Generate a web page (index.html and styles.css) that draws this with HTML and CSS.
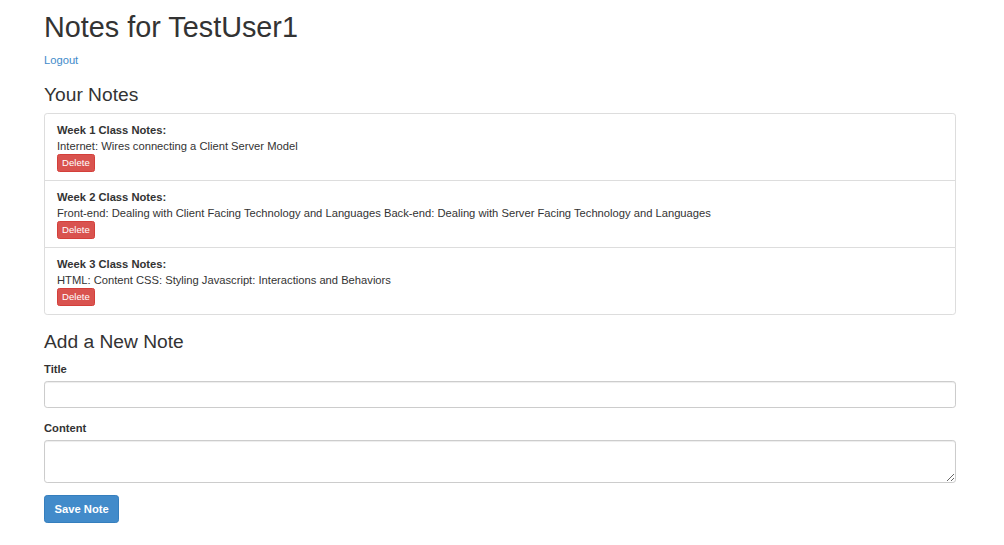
FILE: index.html
```html
<!DOCTYPE html>
<html>
<head>
<meta charset="utf-8">
<title>Notes</title>
<link rel="stylesheet" href="styles.css">
</head>
<body>
<div class="container">
  <h1 class="page-title">Notes for TestUser1</h1>
  <a class="logout" href="#">Logout</a>
  <h3 class="section-title">Your Notes</h3>
  <ul class="list-group">
    <li class="list-group-item">
      <strong>Week 1 Class Notes:</strong><br>
      Internet: Wires connecting a Client Server Model<br>
      <button class="btn btn-danger btn-xs">Delete</button>
    </li>
    <li class="list-group-item">
      <strong>Week 2 Class Notes:</strong><br>
      Front-end: Dealing with Client Facing Technology and Languages Back-end: Dealing with Server Facing Technology and Languages<br>
      <button class="btn btn-danger btn-xs">Delete</button>
    </li>
    <li class="list-group-item">
      <strong>Week 3 Class Notes:</strong><br>
      HTML: Content CSS: Styling Javascript: Interactions and Behaviors<br>
      <button class="btn btn-danger btn-xs">Delete</button>
    </li>
  </ul>
  <h3 class="section-title form-title">Add a New Note</h3>
  <form class="note-form">
    <div class="form-group">
      <label class="form-label" for="title">Title</label>
      <input class="form-control" id="title" type="text">
    </div>
    <div class="form-group">
      <label class="form-label" for="content">Content</label>
      <textarea class="form-control" id="content" rows="2"></textarea>
    </div>
    <button type="button" class="btn btn-primary">Save Note</button>
  </form>
</div>
</body>
</html>
```
FILE: styles.css
```css
* { box-sizing: border-box; }
html, body { margin: 0; padding: 0; background: #fff; }
body {
  font-family: "Liberation Sans", Arial, Helvetica, sans-serif;
  font-size: 11.2px;
  line-height: 16px;
  color: #333;
}
.container {
  width: 912px;
  margin-left: 44px;
}
.page-title {
  font-size: 28.8px;
  font-weight: 400;
  line-height: 1.1;
  margin: 12px 0 8px;
}
.logout {
  color: #428bca;
  text-decoration: none;
  font-weight: 400;
}
.section-title {
  font-size: 19.2px;
  font-weight: 400;
  line-height: 1.1;
  margin: 16px 0 8px;
}
.form-title { margin-bottom: 9px; }
.list-group {
  list-style: none;
  margin: 0 0 16px;
  padding: 0;
}
.list-group-item {
  border: 1px solid #ddd;
  padding: 8px 12px;
  margin-bottom: -1px;
  background: #fff;
}
.list-group-item:first-child { border-radius: 3.2px 3.2px 0 0; }
.list-group-item:last-child { border-radius: 0 0 3.2px 3.2px; margin-bottom: 0; }
.btn {
  display: inline-block;
  font-family: inherit;
  font-weight: 400;
  text-align: center;
  white-space: nowrap;
  vertical-align: middle;
  border: 1px solid transparent;
  cursor: pointer;
  margin: 0;
}
.btn-xs {
  font-size: 9.6px;
  line-height: 1.5;
  padding: 0.8px 4px;
  border-radius: 2.4px;
}
.btn-danger {
  color: #fff;
  background: #d9534f;
  border-color: #d43f3a;
}
.btn-primary {
  color: #fff;
  background: #428bca;
  border-color: #357ebd;
  font-size: 11.2px;
  font-weight: 700;
  line-height: 16px;
  padding: 4.8px 9.6px;
  border-radius: 3.2px;
}
.form-group { margin-bottom: 12px; }
.form-label {
  display: inline-block;
  font-weight: 700;
  margin-bottom: 4px;
}
.form-control {
  display: block;
  width: 100%;
  height: 27.2px;
  padding: 4.8px 9.6px;
  font-family: inherit;
  font-size: 11.2px;
  line-height: 16px;
  color: #555;
  background: #fff;
  border: 1px solid #ccc;
  border-radius: 3.2px;
  box-shadow: inset 0 1px 1px rgba(0,0,0,.075);
  margin: 0;
}
textarea.form-control {
  height: 43px;
  resize: vertical;
}
```
